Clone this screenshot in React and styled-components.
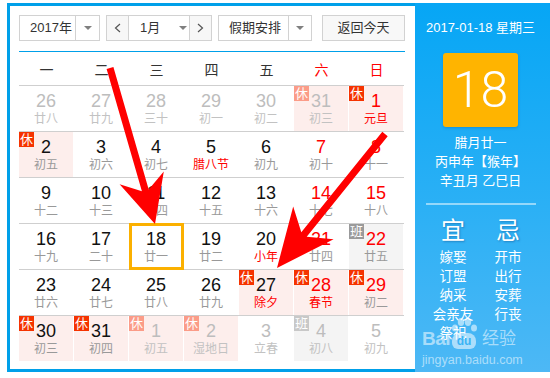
import React from 'react';
import styled, { createGlobalStyle } from 'styled-components';

const FONT = `"Liberation Sans", Arial, "Noto Sans CJK SC", sans-serif`;
const BLUE = '#00a0e9';

const Global = createGlobalStyle`
  html, body { margin: 0; padding: 0; background: #fff; overflow: hidden; }
  body { font-family: ${FONT}; color: #333; }
  * { box-sizing: border-box; }
`;

const Page = styled.div`
  display: flex;
  margin: 3px 0 0 7px;
  width: 543px;
`;

const LeftPanel = styled.div`
  width: 408px;
  height: 369px;
  border: 3px solid ${BLUE};
  border-right: 0;
  padding: 9px 10px 8px 9px;
  background: #fff;
`;

const Toolbar = styled.div`
  display: flex;
  height: 26px;
  font-size: 13px;
  color: #333;
`;

const Box = styled.div`
  display: flex;
  width: ${p => p.$w}px;
  margin-right: ${p => p.$mr || 0}px;
  border: 1px solid #d2d2d2;
  background: ${p => p.$bg || '#fff'};
`;

const Label = styled.div`
  width: ${p => p.$w}px;
  padding-left: ${p => p.$pl}px;
  line-height: 24px;
  white-space: nowrap;
`;

const Caret = styled.div`
  flex: 1;
  display: flex;
  align-items: center;
  justify-content: center;
  border-left: ${p => (p.$line ? '1px solid #d2d2d2' : '0')};
  &::after {
    content: '';
    border-left: 4px solid transparent;
    border-right: 4px solid transparent;
    border-top: 4px solid #808080;
  }
`;

const NavBtn = styled.div`
  width: 22px;
  display: flex;
  align-items: center;
  justify-content: center;
  background: #f7f7f7;
  border-left: ${p => (p.$side === 'right' ? '1px solid #d2d2d2' : '0')};
  border-right: ${p => (p.$side === 'left' ? '1px solid #d2d2d2' : '0')};
`;

const MonthMid = styled.div`
  width: 60px;
  display: flex;
  align-items: center;
  padding-left: 11px;
  line-height: 24px;
  & > span { width: 36px; }
`;

const ReturnBtn = styled.div`
  width: 83px;
  border: 1px solid #d2d2d2;
  background: #f8f8f8;
  text-align: center;
  line-height: 24px;
`;

const BlueRule = styled.div`
  height: 1px;
  margin-top: 10px;
  background: ${BLUE};
`;

const WeekRow = styled.div`
  display: grid;
  grid-template-columns: repeat(7, 55px);
  height: 33px;
  align-items: center;
  font-size: 14px;
`;

const WeekName = styled.div`
  text-align: center;
  color: ${p => (p.$red ? '#f00' : '#333')};
`;

const Grid = styled.div`
  display: grid;
  grid-template-columns: repeat(7, 55px);
  grid-auto-rows: 46px;
`;

const Cell = styled.div`
  position: relative;
  border-top: 1px solid #cfcfcf;
`;

const CellBody = styled.div`
  height: 45px;
  margin-right: 1px;
  padding-top: 5px;
  background: ${p => p.$bg};
  display: flex;
  flex-direction: column;
  align-items: center;
`;

const DayNum = styled.div`
  font-size: 18px;
  line-height: 20px;
  color: ${p => p.$c};
`;

const Lunar = styled.div`
  font-size: 12px;
  line-height: 16px;
  color: ${p => p.$c};
  white-space: nowrap;
`;

const Badge = styled.div`
  position: absolute;
  top: 0;
  left: 0;
  width: 15px;
  height: 15px;
  font-size: 13px;
  line-height: 15px;
  text-align: center;
  color: #fff;
  background: ${p => p.$bg};
`;

const TodayRing = styled.div`
  position: absolute;
  top: -1px;
  left: 0;
  width: 55px;
  height: 47px;
  border: 3px solid #fbb000;
  z-index: 2;
`;

const RightPanel = styled.div`
  position: relative;
  width: 135px;
  height: 369px;
  padding-right: 4px;
  background: linear-gradient(180deg, #06a6f5 0%, #2bb0f5 55%, #4db8f5 100%);
  color: #fff;
  display: flex;
  flex-direction: column;
  align-items: center;
`;

const DateLine = styled.div`
  margin-top: 16px;
  font-size: 13px;
  line-height: 18px;
  white-space: nowrap;
`;

const BigDay = styled.div`
  margin-top: 16px;
  width: 75px;
  height: 74px;
  border-radius: 3px;
  background: #ffb400;
  box-shadow: 0 1px 3px rgba(0, 60, 120, 0.25);
  display: flex;
  align-items: center;
  justify-content: center;
  font-family: Roboto, "Liberation Sans", sans-serif;
  font-weight: 300;
  font-size: 50px;
  color: #fff;
`;

const LunarInfo = styled.div`
  margin-top: 6px;
  font-size: 13px;
  line-height: 19px;
  text-align: center;
  white-space: nowrap;
`;

const Sep = styled.div`
  margin-top: 13px;
  width: 110px;
  height: 2px;
  background: rgba(255, 255, 255, 0.5);
`;

const YiJi = styled.div`
  margin-top: 12px;
  display: grid;
  grid-template-columns: 55px 55px;
`;

const YiCol = styled.div`
  display: flex;
  flex-direction: column;
  align-items: center;
`;

const YiHead = styled.div`
  font-size: 24px;
  line-height: 28px;
  margin-bottom: 3px;
  text-shadow: 1px 1px 2px rgba(0, 40, 100, 0.35);
`;

const YiItem = styled.div`
  font-size: 13.5px;
  line-height: 19px;
  white-space: nowrap;
`;

const Watermark = styled.div`
  position: absolute;
  left: 7px;
  top: 314px;
  width: 100px;
  color: rgba(255, 255, 255, 0.55);
  z-index: 3;
`;

const WmTop = styled.div`
  display: flex;
  align-items: flex-end;
  height: 32px;
`;

const WmBai = styled.span`
  font-family: "Liberation Sans", sans-serif;
  font-weight: bold;
  font-size: 19px;
  line-height: 20px;
  letter-spacing: -0.5px;
`;

const WmPaw = styled.span`
  position: relative;
  width: 28px;
  height: 32px;
  display: inline-block;
`;

const WmDu = styled.span`
  position: absolute;
  left: 2px;
  bottom: 0;
  width: 24px;
  height: 16px;
  border-radius: 8px 8px 6px 6px;
  background: rgba(255, 255, 255, 0.55);
  color: #3bb3f5;
  font-family: "Liberation Sans", sans-serif;
  font-weight: bold;
  font-size: 12px;
  line-height: 16px;
  text-align: center;
`;

const WmJy = styled.span`
  font-size: 17px;
  line-height: 20px;
  margin-left: 4px;
`;

const WmUrl = styled.div`
  margin-top: 4px;
  font-family: "Liberation Sans", sans-serif;
  font-size: 12.5px;
  line-height: 14px;
  white-space: nowrap;
`;

const Overlay = styled.svg`
  position: absolute;
  left: 0;
  top: 0;
  pointer-events: none;
  z-index: 5;
`;

const Chevron = ({ dir }) => (
  <svg width="7" height="10" viewBox="0 0 7 10">
    <polyline
      points={dir === 'left' ? '6,1 1.5,5 6,9' : '1,1 5.5,5 1,9'}
      fill="none"
      stroke="#555"
      strokeWidth="1.2"
    />
  </svg>
);

const C = (d, l, opts = {}) => ({ d, l, ...opts });
const cells = [
  C(26, '廿八', { o: 1 }), C(27, '廿九', { o: 1 }), C(28, '三十', { o: 1 }), C(29, '初一', { o: 1 }), C(30, '初二', { o: 1 }), C(31, '初三', { o: 1, b: '休' }), C(1, '元旦', { w: 1, f: 1, b: '休' }),
  C(2, '初五', { b: '休' }), C(3, '初六'), C(4, '初七'), C(5, '腊八节', { f: 1 }), C(6, '初九'), C(7, '初十', { w: 1 }), C(8, '十一', { w: 1 }),
  C(9, '十二'), C(10, '十三'), C(11, '十四'), C(12, '十五'), C(13, '十六'), C(14, '十七', { w: 1 }), C(15, '十八', { w: 1 }),
  C(16, '十九'), C(17, '二十'), C(18, '廿一', { t: 1 }), C(19, '廿二'), C(20, '小年', { f: 1 }), C(21, '廿四', { w: 1 }), C(22, '廿五', { w: 1, b: '班' }),
  C(23, '廿六'), C(24, '廿七'), C(25, '廿八'), C(26, '廿九'), C(27, '除夕', { f: 1, b: '休' }), C(28, '春节', { w: 1, f: 1, b: '休' }), C(29, '初二', { w: 1, b: '休' }),
  C(30, '初三', { b: '休' }), C(31, '初四', { b: '休' }), C(1, '初五', { o: 1, b: '休' }), C(2, '湿地日', { o: 1, b: '休' }), C(3, '立春', { o: 1 }), C(4, '初八', { o: 1, b: '班' }), C(5, '初九', { o: 1 }),
];

const weekNames = ['一', '二', '三', '四', '五', '六', '日'];

function badgeColor(c) {
  if (c.b === '休') return c.o ? '#fb9c88' : '#f53300';
  return c.o ? '#c8c8c8' : '#9a9a9a';
}

function cellBg(c) {
  if (c.b === '休') return '#fdeeec';
  if (c.b === '班') return '#f4f4f4';
  return '#fff';
}

function numColor(c) {
  if (c.o) return '#bdbdbd';
  if (c.w) return '#f00';
  return '#111';
}

function lunarColor(c) {
  if (c.o) return '#c2c2c2';
  if (c.f) return '#f00';
  return '#999';
}

function arrowPoly(x1, y1, x2, y2, L, W, notch, sw) {
  const dx = x2 - x1;
  const dy = y2 - y1;
  const len = Math.hypot(dx, dy);
  const ux = dx / len;
  const uy = dy / len;
  const px = -uy;
  const py = ux;
  const h = sw / 2;
  const bx = x2 - ux * L;
  const by = y2 - uy * L;
  const nx = x2 - ux * (L - notch);
  const ny = y2 - uy * (L - notch);
  const pts = [
    [x1 + px * h, y1 + py * h],
    [nx + px * h, ny + py * h],
    [bx + px * W, by + py * W],
    [x2, y2],
    [bx - px * W, by - py * W],
    [nx - px * h, ny - py * h],
    [x1 - px * h, y1 - py * h],
  ];
  return pts.map(p => p.map(v => v.toFixed(1)).join(',')).join(' ');
}

export default function App() {
  return (
    <>
      <Global />
      <Page>
        <LeftPanel>
          <Toolbar>
            <Box $w={81} $mr={6}>
              <Label $w={55} $pl={10}>2017年</Label>
              <Caret $line />
            </Box>
            <Box $w={106} $mr={6}>
              <NavBtn $side="left"><Chevron dir="left" /></NavBtn>
              <MonthMid><span>1月</span><Caret /></MonthMid>
              <NavBtn $side="right"><Chevron dir="right" /></NavBtn>
            </Box>
            <Box $w={94} $mr={10}>
              <Label $w={69} $pl={10}>假期安排</Label>
              <Caret $line />
            </Box>
            <ReturnBtn>返回今天</ReturnBtn>
          </Toolbar>
          <BlueRule />
          <WeekRow>
            {weekNames.map((n, i) => (
              <WeekName key={n} $red={i >= 5}>{n}</WeekName>
            ))}
          </WeekRow>
          <Grid>
            {cells.map((c, i) => (
              <Cell key={i}>
                <CellBody $bg={cellBg(c)}>
                  <DayNum $c={numColor(c)}>{c.d}</DayNum>
                  <Lunar $c={lunarColor(c)}>{c.l}</Lunar>
                </CellBody>
                {c.b && <Badge $bg={badgeColor(c)}>{c.b}</Badge>}
                {c.t && <TodayRing />}
              </Cell>
            ))}
          </Grid>
        </LeftPanel>
        <RightPanel>
          <DateLine>2017-01-18 星期三</DateLine>
          <BigDay>18</BigDay>
          <LunarInfo>
            <div>腊月廿一</div>
            <div>丙申年【猴年】</div>
            <div>辛丑月 乙巳日</div>
          </LunarInfo>
          <Sep />
          <YiJi>
            <YiCol>
              <YiHead>宜</YiHead>
              <YiItem>嫁娶</YiItem>
              <YiItem>订盟</YiItem>
              <YiItem>纳采</YiItem>
              <YiItem>会亲友</YiItem>
              <YiItem>祭祀</YiItem>
            </YiCol>
            <YiCol>
              <YiHead>忌</YiHead>
              <YiItem>开市</YiItem>
              <YiItem>出行</YiItem>
              <YiItem>安葬</YiItem>
              <YiItem>行丧</YiItem>
            </YiCol>
          </YiJi>
          <Watermark>
            <WmTop>
              <WmBai>Bai</WmBai>
              <WmPaw>
                <svg width="28" height="18" viewBox="0 0 28 18" style={{ position: 'absolute', left: 0, top: 0 }}>
                  <g fill="rgba(255,255,255,0.55)">
                    <ellipse cx="5" cy="11" rx="3" ry="3.6" />
                    <ellipse cx="11" cy="5" rx="3.2" ry="4" />
                    <ellipse cx="18" cy="5" rx="3.2" ry="4" />
                    <ellipse cx="24" cy="11" rx="3" ry="3.6" />
                  </g>
                </svg>
                <WmDu>du</WmDu>
              </WmPaw>
              <WmJy>经验</WmJy>
            </WmTop>
            <WmUrl>jingyan.baidu.com</WmUrl>
          </Watermark>
        </RightPanel>
      </Page>
      <Overlay width="550" height="378" viewBox="0 0 550 378">
        <polygon fill="#ff0000" points={arrowPoly(110, 68, 155, 224, 48, 23, 13, 7)} />
        <polygon fill="#ff0000" points={arrowPoly(385, 134, 277, 268, 58, 26, 15, 7)} />
      </Overlay>
    </>
  );
}
